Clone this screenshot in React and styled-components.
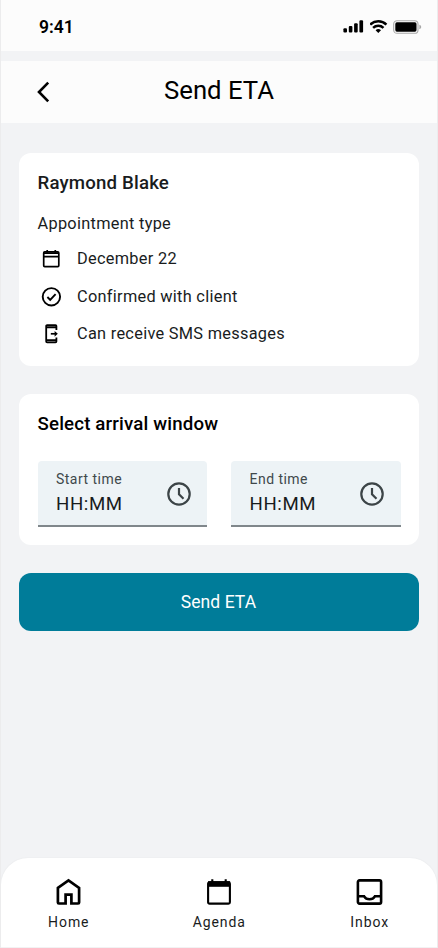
import React, { useState } from "react";
import styled, { createGlobalStyle } from "styled-components";

const GlobalStyle = createGlobalStyle`
  * {
    box-sizing: border-box;
  }

  body {
    margin: 0;
    background: #f2f3f5;
    font-family: Roboto, Arial, sans-serif;
  }

  h1, h2, p {
    margin: 0;
  }
`;

const Screen = styled.div`
  display: flex;
  flex-direction: column;
  width: 438px;
  height: 948px;
  background: #f2f3f5;
  border-left: 1px solid #ececed;
  border-right: 1px solid #ececed;
  overflow: hidden;
`;

const StatusBar = styled.div`
  display: flex;
  align-items: center;
  justify-content: space-between;
  height: 51px;
  padding: 2px 15px 0 38px;
  background: #fcfcfc;
`;

const Time = styled.span`
  font-size: 17.5px;
  font-weight: 600;
  line-height: 22px;
  color: #000;
`;

const StatusIcons = styled.div`
  display: flex;
  align-items: center;
  gap: 5.5px;

  svg {
    display: block;
  }
`;

const Header = styled.header`
  display: grid;
  grid-template-columns: 60px 1fr 60px;
  align-items: center;
  height: 62px;
  margin-top: 10px;
  padding-bottom: 5px;
  background: #fcfcfc;
`;

const BackButton = styled.button`
  display: flex;
  justify-content: flex-end;
  padding: 4px 11px 0 0;
  background: none;
  border: none;
  cursor: pointer;
`;

const Title = styled.h1`
  font-size: 25.7px;
  font-weight: 400;
  line-height: 32px;
  text-align: center;
  color: #000;
`;

const Content = styled.main`
  display: flex;
  flex-direction: column;
  flex: 1;
  gap: 28px;
  padding: 30px 18px 0;
`;

const Card = styled.section`
  height: ${({ $height }) => $height}px;
  padding: 18px 18.5px 0;
  background: #fff;
  border-radius: 12px;
`;

const CardTitle = styled.h2`
  font-size: 18.67px;
  font-weight: 500;
  line-height: 24px;
  letter-spacing: 0.17px;
  color: ${({ $color }) => $color || "#191c1d"};
`;

const Text = styled.p`
  font-size: 16.33px;
  line-height: 24px;
  letter-spacing: 0.29px;
  color: #191c1d;
`;

const Subtitle = styled(Text)`
  margin-top: 17px;
`;

const DetailList = styled.div`
  display: flex;
  flex-direction: column;
  gap: 13.5px;
  margin-top: 11px;
`;

const Detail = styled.div`
  display: flex;
  align-items: center;
  gap: 12px;
  height: 24px;
  margin-left: -0.5px;

  svg {
    flex: none;
  }
`;

const Fields = styled.div`
  display: grid;
  grid-template-columns: 1fr 1fr;
  gap: 24px;
  margin-top: 25px;
`;

const Field = styled.label`
  display: flex;
  align-items: center;
  justify-content: space-between;
  height: 66px;
  padding: 1px 16.5px 0 18.5px;
  background: #edf3f6;
  border-bottom: 2px solid #80878b;
  border-radius: 4px 4px 0 0;
`;

const FieldBody = styled.div`
  display: flex;
  flex-direction: column;
`;

const FieldLabel = styled.span`
  font-size: 14px;
  line-height: 19px;
  letter-spacing: 0.47px;
  color: #40484b;
`;

const FieldInput = styled.input`
  width: 90px;
  height: 29px;
  padding: 1px 0 0;
  background: none;
  border: none;
  outline: none;
  font-family: inherit;
  font-size: 18.67px;
  letter-spacing: 0.58px;
  color: #191c1d;

  &::placeholder {
    color: #191c1d;
    opacity: 1;
  }
`;

const SendButton = styled.button`
  flex: none;
  height: 58px;
  padding: 0 1px 0 0;
  background: #007c99;
  border: none;
  border-radius: 12px;
  font-family: inherit;
  font-size: 17.5px;
  letter-spacing: 0.06px;
  color: #fff;
  cursor: pointer;
`;

const BottomNav = styled.nav`
  display: flex;
  justify-content: space-between;
  height: 90px;
  padding: 20px 28px 0 27px;
  background: #fff;
  border-radius: 27px 27px 0 0;
  border-bottom: 1px solid #f2f2f3;
  box-shadow: 0 0 2px rgba(0, 0, 0, 0.06);
`;

const NavItem = styled.a`
  display: flex;
  flex-direction: column;
  align-items: center;
  gap: 7px;
  width: 80px;
  cursor: pointer;
`;

const NavLabel = styled.span`
  padding-left: 1.5px;
  font-size: 14px;
  line-height: 19px;
  letter-spacing: 0.93px;
  color: #191c1d;
`;

const SignalIcon = () => (
  <svg width="21" height="13" viewBox="0 0 21 13">
    <rect x="0.4" y="8.2" width="3.6" height="4.4" rx="1.1" />
    <rect x="5.8" y="6" width="3.6" height="6.6" rx="1.1" />
    <rect x="11.1" y="3.2" width="3.6" height="9.4" rx="1.1" />
    <rect x="16.4" y="0.3" width="3.7" height="12.3" rx="1.1" />
  </svg>
);

const WifiIcon = () => (
  <svg width="18" height="13" viewBox="0.7 0 18 13" fill="none" stroke="#000" strokeWidth="2.5">
    <path d="M0.9 4.6a11.6 11.6 0 0 1 16.2 0" />
    <path d="M3.8 7.8a7.5 7.5 0 0 1 10.4 0" />
    <path d="M6.3 10.3a3.9 3.9 0 0 1 5.4 0L9 13z" fill="#000" stroke="none" />
  </svg>
);

const BatteryIcon = () => (
  <svg width="29" height="14" viewBox="0 0 29 14">
    <rect x="0.7" y="0.7" width="24.3" height="12.6" rx="3.4" fill="none" stroke="#a8a8a8" strokeWidth="1.1" />
    <rect x="2.3" y="2.3" width="21.2" height="9.4" rx="1.6" />
    <path d="M26.4 4.8c1.2.4 1.8 1.2 1.8 2.2s-.6 1.8-1.8 2.2z" fill="#a8a8a8" />
  </svg>
);

const BackIcon = () => (
  <svg width="14" height="22" viewBox="0 0 14 22" fill="none" stroke="#000" strokeWidth="2.6">
    <path d="M12.2 1.7L3 11l9.2 9.3" />
  </svg>
);

const CalendarIcon = () => (
  <svg width="28" height="24" viewBox="-0.4 0 28 24" fill="none" stroke="#000" strokeWidth="1.7">
    <rect x="6.3" y="4.9" width="15.1" height="14.7" rx="1" />
    <path d="M6 9.7h15.6M6.5 6.1h14.8" />
    <path d="M9.8 3v2.5M17.9 3v2.5" />
  </svg>
);

const CheckIcon = () => (
  <svg width="28" height="24" viewBox="-0.4 0 28 24" fill="none" stroke="#000" strokeWidth="1.9">
    <circle cx="14" cy="11.8" r="8.7" />
    <path d="M10 12l2.8 2.8 5.4-5.7" />
  </svg>
);

const PhoneIcon = () => (
  <svg width="28" height="24" viewBox="-0.4 0 28 24" fill="none" stroke="#000" strokeWidth="1.8">
    <path d="M19 8V4.1a.9.9 0 0 0-.9-.9H9.7a.9.9 0 0 0-.9.9v15.3c0 .5.4.9.9.9h8.4c.5 0 .9-.4.9-.9v-3.8" />
    <path d="M8.8 5.2H19M8.8 18.2H19" strokeWidth="2" />
    <path d="M13.4 11.8h5" strokeWidth="1.7" />
    <path d="M17.2 8.9l3.2 2.9-3.2 2.9z" fill="#000" stroke="none" />
  </svg>
);

const ClockIcon = () => (
  <svg width="24" height="24" viewBox="0 0 24 24" fill="none" stroke="#3c4447" strokeWidth="2.2">
    <circle cx="12" cy="12" r="10.7" />
    <path d="M12 6v6.3l4.5 4.5" />
  </svg>
);

const HomeIcon = () => (
  <svg width="28" height="28" viewBox="-0.5 0 28 28" fill="none" stroke="#000" strokeWidth="2.7">
    <path d="M3.4 9.9L14 2.5l10.6 7.4v14.6c0 .6-.4 1-1 1h-6.7v-8.9h-5.8v8.9H4.4c-.6 0-1-.4-1-1z" />
  </svg>
);

const AgendaIcon = () => (
  <svg width="28" height="28" viewBox="0 0 28 28" fill="none" stroke="#000" strokeWidth="2.1">
    <rect x="3.1" y="4.3" width="21.8" height="21.3" rx="1.4" />
    <path d="M3 6h22" strokeWidth="5.6" />
    <path d="M7.3 1.2v3M20.7 1.2v3" strokeWidth="2.1" />
  </svg>
);

const InboxIcon = () => (
  <svg width="28" height="28" viewBox="-0.5 0 28 28" fill="none" stroke="#000" strokeWidth="2.6">
    <rect x="2.4" y="2.4" width="23.2" height="23.2" rx="1.6" />
    <path d="M2.4 18.3h6.2c1.1 1.9 3.1 2.9 5.4 2.9s4.3-1 5.4-2.9h6.2" />
  </svg>
);

const details = [
  { text: "December 22", Icon: CalendarIcon },
  { text: "Confirmed with client", Icon: CheckIcon },
  { text: "Can receive SMS messages", Icon: PhoneIcon },
];

const navItems = [
  { text: "Home", Icon: HomeIcon },
  { text: "Agenda", Icon: AgendaIcon },
  { text: "Inbox", Icon: InboxIcon },
];

const TimeField = ({ label, value, onChange }) => (
  <Field>
    <FieldBody>
      <FieldLabel>{label}</FieldLabel>
      <FieldInput
        value={value}
        onChange={(e) => onChange(e.target.value)}
        placeholder="HH:MM"
      />
    </FieldBody>
    <ClockIcon />
  </Field>
);

export default function App() {
  const [start, setStart] = useState("");
  const [end, setEnd] = useState("");

  return (
    <>
      <GlobalStyle />
      <Screen>
        <StatusBar>
          <Time>9:41</Time>
          <StatusIcons>
            <SignalIcon />
            <WifiIcon />
            <BatteryIcon />
          </StatusIcons>
        </StatusBar>
        <Header>
          <BackButton aria-label="Back">
            <BackIcon />
          </BackButton>
          <Title>Send ETA</Title>
        </Header>
        <Content>
          <Card $height={213}>
            <CardTitle>Raymond Blake</CardTitle>
            <Subtitle>Appointment type</Subtitle>
            <DetailList>
              {details.map(({ text, Icon }) => (
                <Detail key={text}>
                  <Icon />
                  <Text>{text}</Text>
                </Detail>
              ))}
            </DetailList>
          </Card>
          <Card $height={151}>
            <CardTitle $color="#000">Select arrival window</CardTitle>
            <Fields>
              <TimeField label="Start time" value={start} onChange={setStart} />
              <TimeField label="End time" value={end} onChange={setEnd} />
            </Fields>
          </Card>
          <SendButton>Send ETA</SendButton>
        </Content>
        <BottomNav>
          {navItems.map(({ text, Icon }) => (
            <NavItem key={text}>
              <Icon />
              <NavLabel>{text}</NavLabel>
            </NavItem>
          ))}
        </BottomNav>
      </Screen>
    </>
  );
}
